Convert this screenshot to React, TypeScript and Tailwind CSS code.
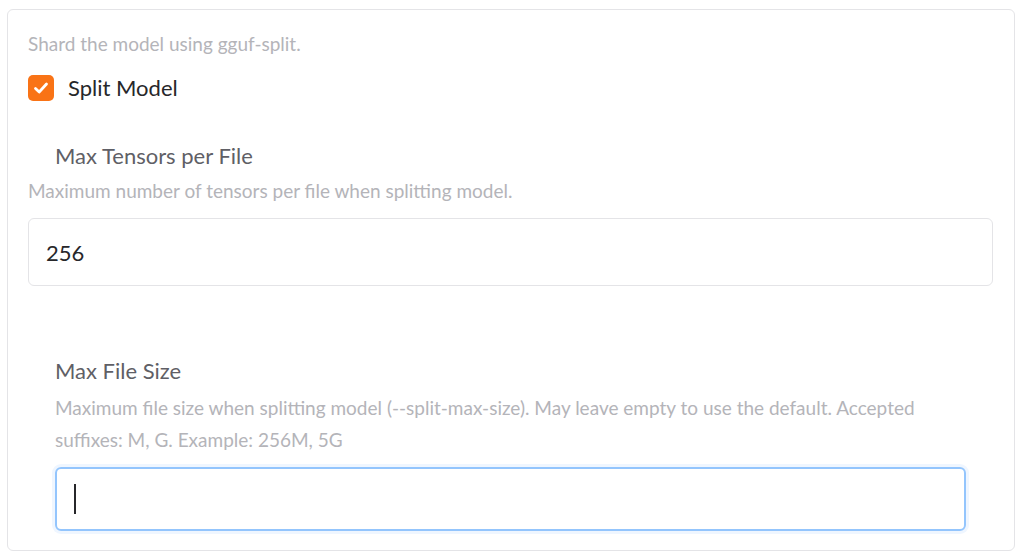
import React from 'react';

const font = { fontFamily: 'Lato, "Noto Sans", sans-serif' };

export default function App() {
  return (
    <div className="w-[1024px] h-[558px] bg-white pt-[9px] pl-[7px]" style={font}>
      <div className="w-[1008px] h-[542px] border border-[#e4e4e7] rounded-[6px] px-5 pt-[20px]">
        <p className="text-[19px] leading-[28px] text-[#b4b4b9]">Shard the model using gguf-split.</p>
        <label className="flex items-center gap-[14px] mt-[17px]">
          <span className="w-[26px] h-[26px] rounded-[5px] bg-[#f97316] flex items-center justify-center">
            <svg width="18" height="18" viewBox="0 0 18 18" fill="none">
              <path d="M3.5 9.5 7.2 13 14.5 5" stroke="white" strokeWidth="2.8" strokeLinecap="round" strokeLinejoin="round" />
            </svg>
          </span>
          <span className="text-[22px] leading-[26px] text-[#27272a]">Split Model</span>
        </label>

        <div className="mt-[40px]">
          <p className="pl-[27px] text-[22px] leading-[30px] text-[#5f5f66]">Max Tensors per File</p>
          <p className="mt-[6px] text-[19px] leading-[28px] text-[#b4b4b9]">
            Maximum number of tensors per file when splitting model.
          </p>
          <div className="mt-[13px] mr-px h-[68px] border border-[#e4e4e7] rounded-[6px] flex items-center pl-[17px] text-[22px] text-[#27272a]">
            256
          </div>
        </div>

        <div className="mt-[70px] pl-[27px] pr-[28px]">
          <p className="text-[22px] leading-[30px] text-[#5f5f66]">Max File Size</p>
          <p className="mt-[6px] text-[19px] leading-[32px] text-[#b4b4b9]">
            Maximum file size when splitting model (--split-max-size). May leave empty to use the default. Accepted
            suffixes: M, G. Example: 256M, 5G
          </p>
          <div className="mt-[11px] h-[64px] border-2 border-[#93c5fd] rounded-[6px] ring-[3px] ring-[#eff6ff] flex items-center pl-[17px]">
            <span className="w-[2px] h-[30px] bg-[#27272a]" />
          </div>
        </div>
      </div>
    </div>
  );
}
